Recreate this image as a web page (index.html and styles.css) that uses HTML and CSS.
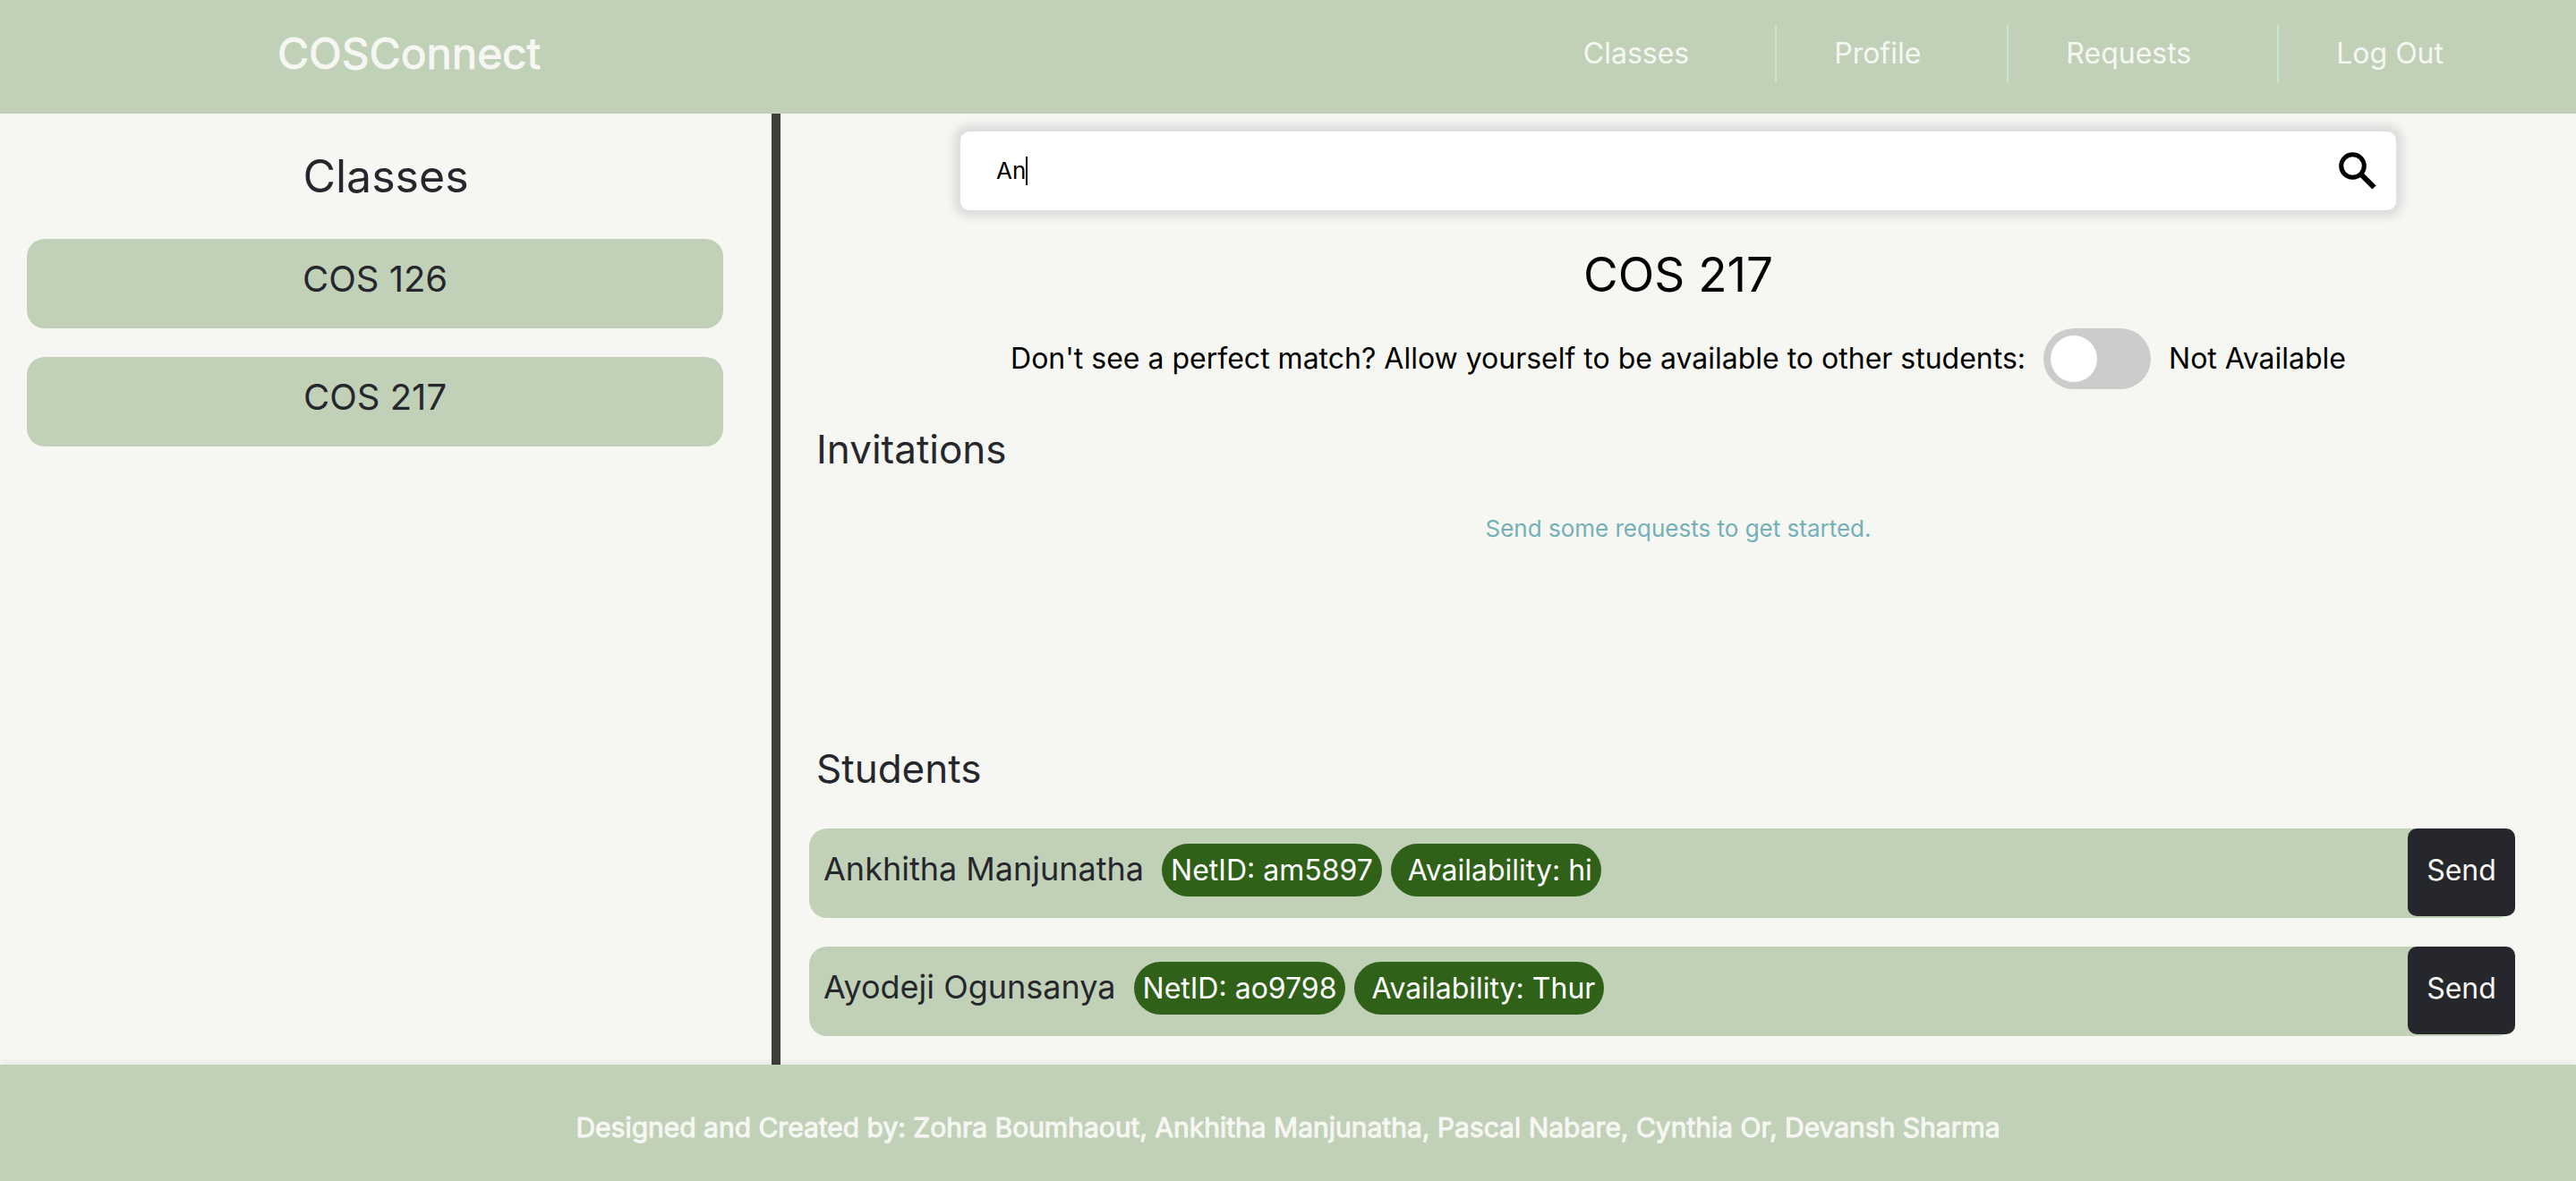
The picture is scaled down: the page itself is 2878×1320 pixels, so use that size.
FILE: index.html
```html
<!DOCTYPE html>
<html lang="en">
<head>
  <meta charset="utf-8">
  <title>COSConnect</title>
  <link rel="stylesheet" href="styles.css">
</head>
<body>
  <header class="site-header">
    <a class="brand" href="#">COSConnect</a>
    <nav class="site-nav">
      <a class="nav-link" href="#">Classes</a>
      <a class="nav-link" href="#">Profile</a>
      <a class="nav-link" href="#">Requests</a>
      <a class="nav-link" href="#">Log Out</a>
    </nav>
  </header>

  <div class="columns">
    <aside class="sidebar">
      <h2 class="sidebar-title">Classes</h2>
      <ul class="class-list">
        <li><button class="class-item" type="button">COS 126</button></li>
        <li><button class="class-item" type="button">COS 217</button></li>
      </ul>
    </aside>

    <main class="content">
      <form class="search">
        <input class="search-input" type="text" value="An" aria-label="Search students">
        <span class="caret"></span>
        <button class="search-button" type="button" aria-label="Search">
          <svg class="search-icon" viewBox="0 0 42 42" aria-hidden="true"><circle cx="15.500" cy="15.500" r="12.800"/><path d="M24.500 24.500 39.500 39.500"/></svg>
        </button>
      </form>

      <h1 class="course-title">COS 217</h1>

      <div class="availability">
        <label for="available">Don't see a perfect match? Allow yourself to be available to other students:</label>
        <input class="switch" id="available" type="checkbox">
        <span>Not Available</span>
      </div>

      <section class="invitations">
        <h2 class="section-title">Invitations</h2>
        <p class="empty-note">Send some requests to get started.</p>
      </section>

      <section>
        <h2 class="section-title">Students</h2>
        <ul class="student-list">
          <li class="student">
            <span class="student-name">Ankhitha Manjunatha</span>
            <span class="pill">NetID: am5897</span>
            <span class="pill">&nbsp;Availability: hi</span>
            <button class="send" type="button">Send</button>
          </li>
          <li class="student">
            <span class="student-name">Ayodeji Ogunsanya</span>
            <span class="pill">NetID: ao9798</span>
            <span class="pill">&nbsp;Availability: Thur</span>
            <button class="send" type="button">Send</button>
          </li>
        </ul>
      </section>
    </main>
  </div>

  <footer class="site-footer">Designed and Created by: Zohra Boumhaout, Ankhitha Manjunatha, Pascal Nabare, Cynthia Or, Devansh Sharma</footer>
</body>
</html>
```
FILE: styles.css
```css
:root {
  --sage: #c1d1b8;
  --paper: #f6f7f2;
  --ink: #26272d;
  --forest: #2f6218;
}

* {
  box-sizing: border-box;
}

body {
  margin: 0;
  min-height: 100vh;
  display: flex;
  flex-direction: column;
  background: var(--paper);
  color: #000;
  font-family: Inter, "Liberation Sans", sans-serif;
  font-size: 32px;
  line-height: 48px;
}

h1,
h2,
p,
ul {
  margin: 0;
  padding: 0;
  font-weight: 400;
  list-style: none;
}

button,
input {
  font: inherit;
  margin: 0;
  padding: 0;
  border: 0;
}

.site-header {
  display: flex;
  justify-content: space-between;
  padding: 28px 148px 35px 310px;
  background: var(--sage);
}

.brand {
  color: var(--paper);
  font-size: 48px;
  line-height: 64px;
  text-decoration: none;
  -webkit-text-stroke: 1px var(--paper);
}

.site-nav {
  display: flex;
}

.nav-link {
  padding: 0 96px 0 64px;
  border-right: 2px solid #c3e8cf;
  color: var(--paper);
  line-height: 64px;
  text-decoration: none;
}

.nav-link:last-child {
  padding-right: 0;
  border-right: 0;
}

.columns {
  flex: 1;
  display: flex;
}

.sidebar {
  width: 30.3%;
  padding: 40px 54px 32px 30px;
  border-right: 10px solid #403f3b;
}

.sidebar-title {
  margin: 0 -24px 40px 0;
  color: var(--ink);
  font-size: 50px;
  line-height: 60px;
  text-align: center;
}

.class-list,
.student-list {
  display: flex;
  flex-direction: column;
  gap: 32px;
}

.class-item {
  display: block;
  width: 100%;
  height: 100px;
  padding-bottom: 10px;
  border-radius: 20px;
  background: var(--sage);
  color: var(--ink);
  font-size: 40px;
}

.content {
  flex: 1;
  padding: 20px 32px 32px;
}

.search {
  display: flex;
  align-items: center;
  width: 82.6%;
  height: 88px;
  margin: 0 auto;
  padding: 0 22px 0 40px;
  border-radius: 10px;
  background: #fff;
  box-shadow: 0 0 8px 8px #dedede;
}

.search-input {
  field-sizing: content;
  background: transparent;
  font-size: 26px;
  line-height: 32px;
  outline: 0;
}

.caret {
  width: 2px;
  height: 32px;
  background: #000;
}

.search-button {
  margin-left: auto;
  background: transparent;
}

.search-icon {
  display: block;
  width: 42px;
  height: 42px;
  fill: none;
  stroke: #000;
  stroke-width: 5;
}

.search-icon path {
  stroke-width: 6;
}

.course-title {
  margin-top: 40px;
  font-size: 53px;
  line-height: 64px;
  text-align: center;
}

.availability {
  display: flex;
  justify-content: center;
  align-items: center;
  gap: 20px;
  margin-top: 28px;
}

.switch {
  appearance: none;
  width: 120px;
  height: 68px;
  padding: 8px;
  border-radius: 34px;
  background: #ccc;
}

.switch::before {
  content: "";
  display: block;
  width: 52px;
  height: 52px;
  border-radius: 50%;
  background: #fff;
}

.section-title {
  padding-left: 8px;
  color: var(--ink);
  font-size: 44px;
  line-height: 56px;
}

.invitations {
  min-height: 357px;
  margin-top: 39px;
}

.empty-note {
  margin-top: 41px;
  color: #74b0b7;
  font-size: 26px;
  line-height: 40px;
  text-align: center;
}

.student-list {
  margin: 39px 36px 0 0;
}

.student {
  display: flex;
  align-items: flex-start;
  gap: 10px;
  height: 100px;
  padding-left: 16px;
  border-radius: 20px;
  background: var(--sage);
}

.student-name {
  margin-right: 10px;
  color: var(--ink);
  font-size: 36px;
  line-height: 90px;
}

.pill {
  margin-top: 17px;
  padding: 0 10px;
  border-radius: 30px;
  background: var(--forest);
  color: #fff;
  line-height: 59px;
}

.send {
  width: 120px;
  height: 98px;
  margin-left: auto;
  padding-bottom: 4px;
  border-radius: 10px;
  background: var(--ink);
  color: var(--paper);
}

.site-footer {
  padding: 46px 32px 36px;
  background: var(--sage);
  box-shadow: 0 0 10px rgba(0, 0, 0, 0.1);
  color: var(--paper);
  font-size: 30px;
  text-align: center;
  -webkit-text-stroke: 1px var(--paper);
}
```
